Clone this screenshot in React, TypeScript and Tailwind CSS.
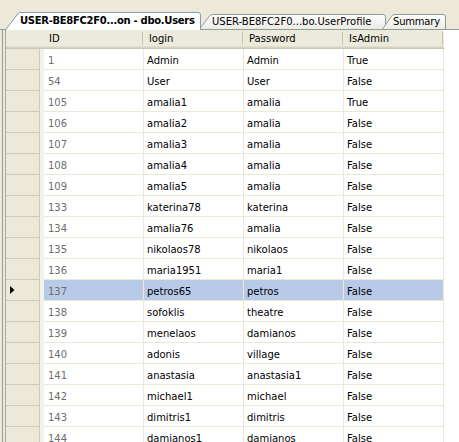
import { FC } from 'react';

interface UserRow {
    id: number;
    login: string;
    password: string;
    isAdmin: string;
}

const rows: UserRow[] = [
    { id: 1, login: 'Admin', password: 'Admin', isAdmin: 'True' },
    { id: 54, login: 'User', password: 'User', isAdmin: 'False' },
    { id: 105, login: 'amalia1', password: 'amalia', isAdmin: 'True' },
    { id: 106, login: 'amalia2', password: 'amalia', isAdmin: 'False' },
    { id: 107, login: 'amalia3', password: 'amalia', isAdmin: 'False' },
    { id: 108, login: 'amalia4', password: 'amalia', isAdmin: 'False' },
    { id: 109, login: 'amalia5', password: 'amalia', isAdmin: 'False' },
    { id: 133, login: 'katerina78', password: 'katerina', isAdmin: 'False' },
    { id: 134, login: 'amalia76', password: 'amalia', isAdmin: 'False' },
    { id: 135, login: 'nikolaos78', password: 'nikolaos', isAdmin: 'False' },
    { id: 136, login: 'maria1951', password: 'maria1', isAdmin: 'False' },
    { id: 137, login: 'petros65', password: 'petros', isAdmin: 'False' },
    { id: 138, login: 'sofoklis', password: 'theatre', isAdmin: 'False' },
    { id: 139, login: 'menelaos', password: 'damianos', isAdmin: 'False' },
    { id: 140, login: 'adonis', password: 'village', isAdmin: 'False' },
    { id: 141, login: 'anastasia', password: 'anastasia1', isAdmin: 'False' },
    { id: 142, login: 'michael1', password: 'michael', isAdmin: 'False' },
    { id: 143, login: 'dimitris1', password: 'dimitris', isAdmin: 'False' },
    { id: 144, login: 'damianos1', password: 'damianos', isAdmin: 'False' },
];

const SELECTED_ID = 137;

// tab outline with the sloped left side
const TabShape: FC<{ w: number; h: number; slant: number; active?: boolean }> = ({ w, h, slant, active }) => {
    const d = `M0.5,${h} L${slant - 1},1.5 Q${slant},0.5 ${slant + 2},0.5 L${w - 3},0.5 Q${w - 0.5},0.5 ${w - 0.5},3 L${w - 0.5},${h}`;
    const gid = active ? 'tabActive' : 'tabIdle';
    return (
        <svg className="absolute inset-0" width={w} height={h} viewBox={`0 0 ${w} ${h}`}>
            <defs>
                <linearGradient id={gid} x1="0" y1="0" x2="0" y2="1">
                    <stop offset="0" stopColor={active ? '#ffffff' : '#fefefe'} />
                    <stop offset="1" stopColor={active ? '#ffffff' : '#ecebe5'} />
                </linearGradient>
            </defs>
            <path d={d} fill={`url(#${gid})`} stroke={active ? '#7f9db9' : '#919b9c'} strokeWidth="1" />
        </svg>
    );
};

const HeaderCell: FC<{ label: string }> = ({ label }) => (
    <div className="w-[100px] h-full flex items-center pl-[5px] pb-[3px] bg-[#ebeadb] shadow-[inset_0_-1px_0_#cbc7b8,inset_0_-2px_0_#d6d2c2,inset_0_-3px_0_#e2decd]">
        <span className="flex-1">{label}</span>
        <span className="w-px h-[13px] bg-[#c7c5b2] mr-[1px]" />
    </div>
);

const App: FC = () => {
    return (
        <div className="w-[459px] h-[442px] overflow-hidden bg-[#ece9d8] text-black text-[10px] font-['Tahoma','DejaVu_Sans',sans-serif] flex flex-col">
            {/* tab strip */}
            <div className="flex items-end h-[30px] shrink-0 pl-[5px] border-b border-[#919b9c]">
                <div className="relative z-[2] w-[196px] h-[18px] -mb-px flex items-center pl-[15px] pb-[1px] font-bold tracking-[-0.3px] whitespace-nowrap">
                    <TabShape w={196} h={18} slant={14} active />
                    <span className="relative">USER-BE8FC2F0...on - dbo.Users</span>
                </div>
                <div className="relative z-0 -ml-[2px] w-[187px] h-[15px] flex items-center pl-[13px] pb-[1px] whitespace-nowrap">
                    <TabShape w={187} h={15} slant={12} />
                    <span className="relative">USER-BE8FC2F0...bo.UserProfile</span>
                </div>
                <div className="relative z-[1] -ml-[4px] w-[64px] h-[15px] flex items-center pl-[11px] pb-[1px] whitespace-nowrap tracking-[-0.2px]">
                    <TabShape w={64} h={15} slant={11} />
                    <span className="relative">Summary</span>
                </div>
            </div>

            {/* grid panel */}
            <div className="flex-1 ml-[2px] pl-[2px] border-l border-[#919b9c]">
                <div className="h-full bg-white border-l border-[#aca899]">
                    <div className="flex h-[19px]">
                        <div className="w-[38px] h-full bg-[#ebeadb] shadow-[inset_0_-1px_0_#cbc7b8,inset_0_-2px_0_#d6d2c2,inset_0_-3px_0_#e2decd]" />
                        <HeaderCell label="ID" />
                        <HeaderCell label="login" />
                        <HeaderCell label="Password" />
                        <HeaderCell label="IsAdmin" />
                    </div>
                    {rows.map((r) => {
                        const selected = r.id === SELECTED_ID;
                        return (
                            <div key={r.id} className="flex h-[21px]">
                                <div className="w-[38px] h-full flex bg-[#ece9d8]">
                                    <div className="w-[34px] h-full flex items-center pl-[4px] border-b border-r border-[#cfcbbb]">
                                        {selected && (
                                            <svg width="5" height="8" viewBox="0 0 5 8">
                                                <path d="M0 0 L4.5 4 L0 8 Z" fill="#000" />
                                            </svg>
                                        )}
                                    </div>
                                    <div className="w-[4px] h-full bg-[#f3f2ea]" />
                                </div>
                                <div className={`flex ${selected ? 'bg-[#b7cbe9]' : 'bg-white'}`}>
                                    <div className="w-[100px] h-full flex items-center pl-[4px] pt-[2px] border-b border-r border-[#ebe8d9] text-[#6d6d6d]">{r.id}</div>
                                    <div className="w-[100px] h-full flex items-center pl-[3px] pt-[2px] border-b border-r border-[#ebe8d9]">{r.login}</div>
                                    <div className="w-[100px] h-full flex items-center pl-[3px] pt-[2px] border-b border-r border-[#ebe8d9]">{r.password}</div>
                                    <div className="w-[100px] h-full flex items-center pl-[3px] pt-[2px] border-b border-r border-[#ebe8d9]">{r.isAdmin}</div>
                                </div>
                            </div>
                        );
                    })}
                </div>
            </div>
        </div>
    );
};

export default App;
